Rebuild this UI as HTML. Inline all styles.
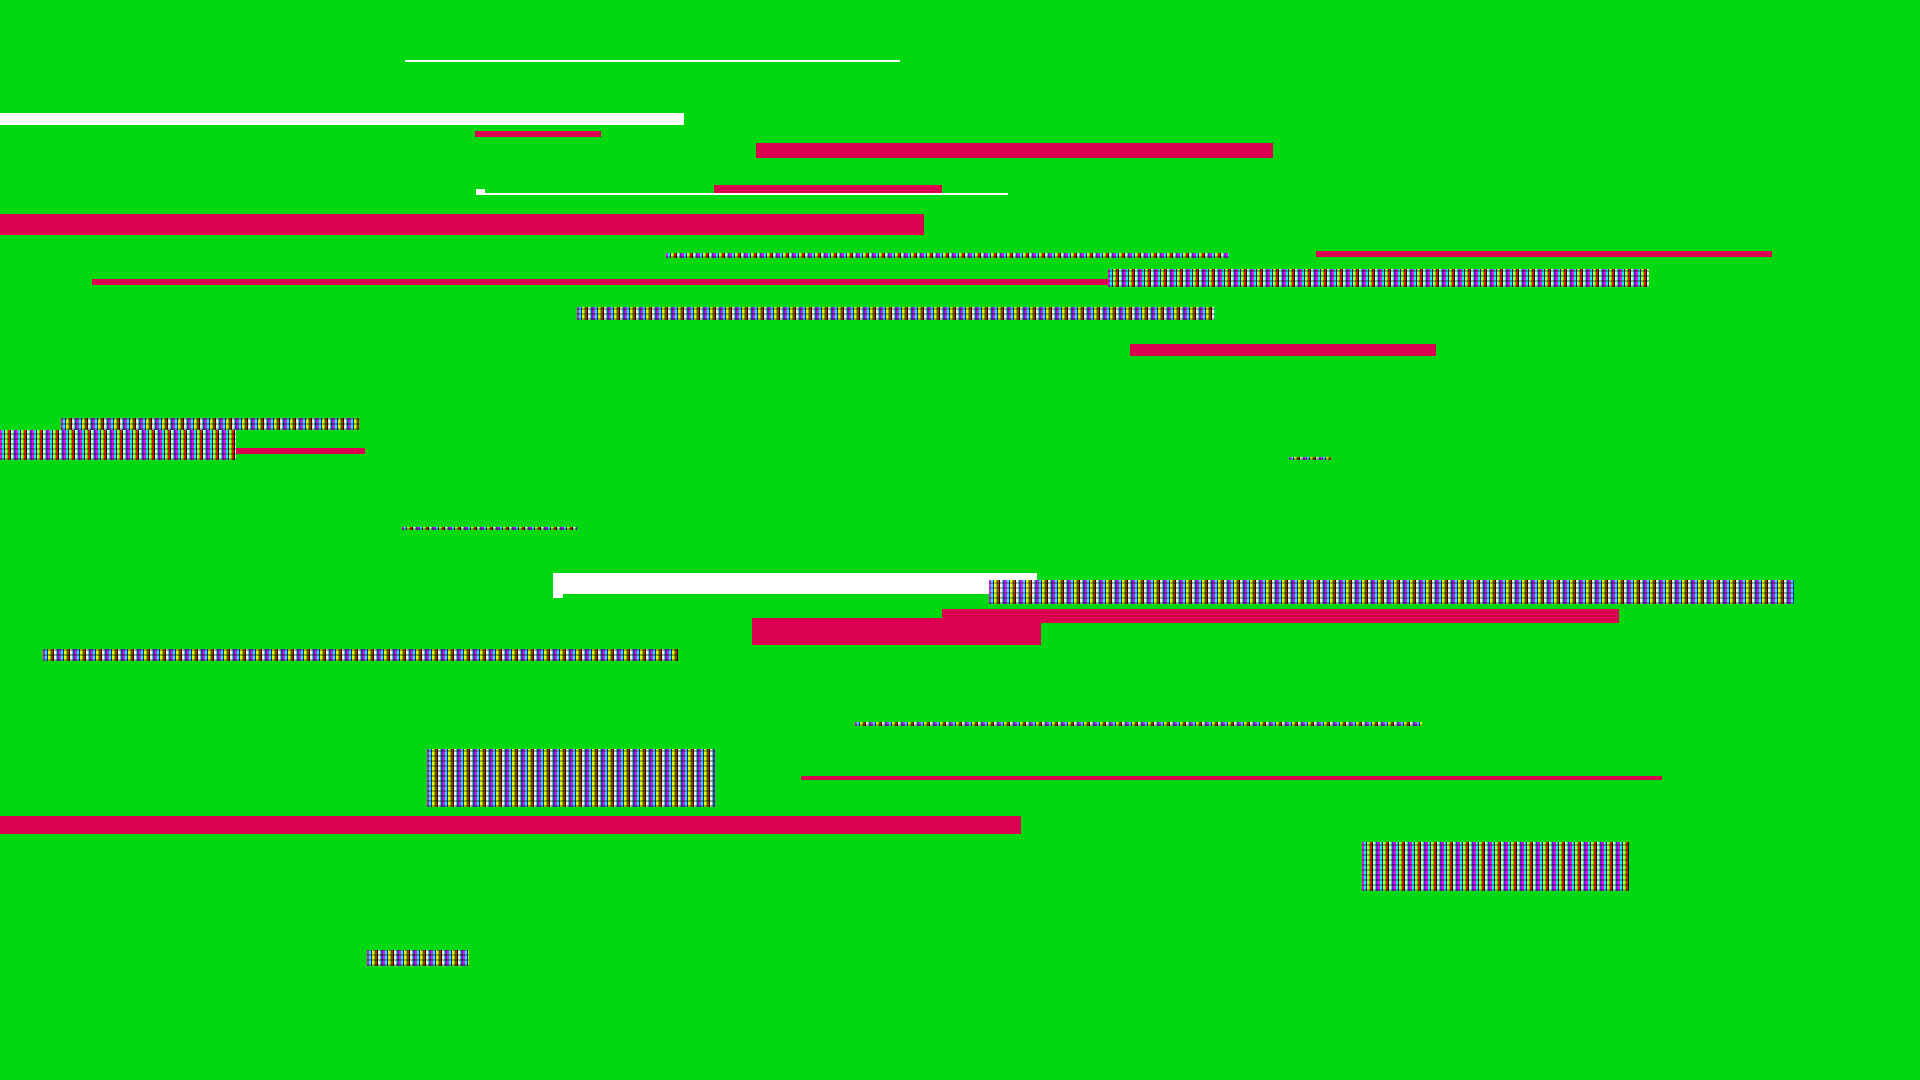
<!DOCTYPE html>
<html><head><meta charset="utf-8"><style>
html,body{margin:0;padding:0;width:1920px;height:1080px;overflow:hidden;background:#00d90f;position:relative}
div{position:absolute}
.r{background:#dc0050}
.w{background:#fff}
.n{background:
repeating-linear-gradient(90deg,#ff00ff 0 2px,#00ffff 2px 4px,#0000ff 4px 5px,#ffff00 5px 7px,#00ff00 7px 8px,#ff0000 8px 10px,#000 10px 11px,#fff 11px 13px,#00ff88 13px 14px,#8800ff 14px 16px),
repeating-linear-gradient(0deg,rgba(0,0,0,.35) 0 2px,rgba(255,255,255,.25) 2px 3px,transparent 3px 5px);
background-blend-mode:multiply;opacity:.9}
</style></head><body>
<div class="w" style="left:405px;top:60px;width:495px;height:2px"></div>
<div class="w" style="left:0;top:113px;width:684px;height:12px"></div>
<div class="r" style="left:475px;top:131px;width:126px;height:6px"></div>
<div class="r" style="left:756px;top:143px;width:517px;height:15px"></div>
<div class="r" style="left:714px;top:185px;width:228px;height:9px"></div>
<div class="w" style="left:476px;top:189px;width:9px;height:6px"></div>
<div class="w" style="left:485px;top:193px;width:523px;height:2px"></div>
<div class="r" style="left:0;top:214px;width:924px;height:21px"></div>
<div class="n" style="left:666px;top:253px;width:563px;height:5px"></div>
<div class="r" style="left:1316px;top:251px;width:456px;height:6px"></div>
<div class="r" style="left:92px;top:279px;width:1016px;height:6px"></div>
<div class="n" style="left:1108px;top:269px;width:541px;height:18px"></div>
<div class="n" style="left:577px;top:307px;width:638px;height:13px"></div>
<div class="r" style="left:1130px;top:344px;width:306px;height:12px"></div>
<div class="n" style="left:61px;top:418px;width:298px;height:12px"></div>
<div class="n" style="left:0;top:430px;width:236px;height:30px"></div>
<div class="r" style="left:236px;top:448px;width:129px;height:6px"></div>
<div class="n" style="left:1289px;top:457px;width:42px;height:3px"></div>
<div class="n" style="left:402px;top:527px;width:175px;height:3px"></div>
<div class="w" style="left:553px;top:573px;width:484px;height:21px"></div>
<div class="w" style="left:553px;top:594px;width:10px;height:4px"></div>
<div class="n" style="left:989px;top:580px;width:805px;height:24px"></div>
<div class="r" style="left:942px;top:609px;width:677px;height:14px"></div>
<div class="r" style="left:752px;top:618px;width:289px;height:27px"></div>
<div class="n" style="left:43px;top:649px;width:635px;height:12px"></div>
<div class="n" style="left:855px;top:722px;width:567px;height:4px"></div>
<div class="n" style="left:427px;top:749px;width:288px;height:58px"></div>
<div class="r" style="left:801px;top:776px;width:861px;height:4px"></div>
<div class="r" style="left:0;top:816px;width:1021px;height:18px"></div>
<div class="n" style="left:1362px;top:842px;width:267px;height:49px"></div>
<div class="n" style="left:367px;top:950px;width:102px;height:16px"></div>
</body></html>
